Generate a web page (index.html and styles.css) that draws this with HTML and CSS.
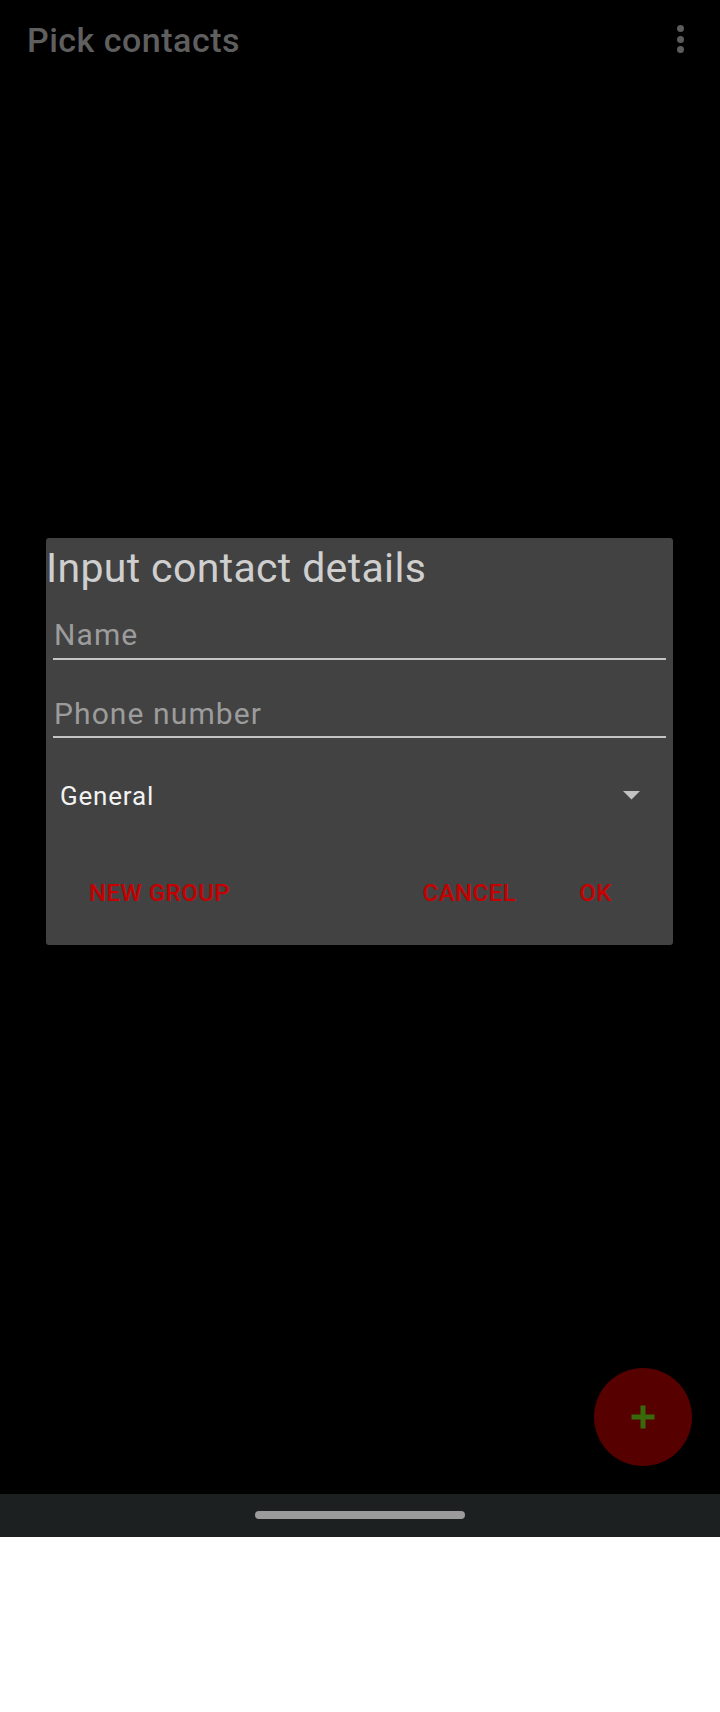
FILE: index.html
```html
<!DOCTYPE html>
<html>
<head>
<meta charset="utf-8">
<link rel="stylesheet" href="styles.css">
</head>
<body>
<div class="screen">
  <div class="app">
    <header class="toolbar">
      <div class="toolbar-title">Pick contacts</div>
      <div class="overflow"><span></span><span></span><span></span></div>
    </header>
    <main class="content"></main>
    <button class="fab" aria-label="Add">
      <svg width="24" height="24" viewBox="0 0 24 24"><rect x="0.5" y="9.5" width="23" height="5" fill="#386a0c"/><rect x="9.5" y="0.5" width="5" height="23" fill="#386a0c"/></svg>
    </button>
    <div class="dialog">
      <div class="dialog-title">Input contact details</div>
      <div class="field field-name"><span class="hint">Name</span></div>
      <div class="field field-phone"><span class="hint">Phone number</span></div>
      <div class="spinner">
        <span class="spinner-text">General</span>
        <svg class="spinner-arrow" width="17" height="9" viewBox="0 0 17 9"><polygon points="0,0 17,0 8.5,8.5" fill="#c2c2c2"/></svg>
      </div>
      <div class="actions">
        <span class="btn">NEW GROUP</span>
        <span class="spacer"></span>
        <span class="btn">CANCEL</span>
        <span class="btn btn-ok">OK</span>
      </div>
    </div>
  </div>
  <div class="navbar"><div class="handle"></div></div>
  <div class="below"></div>
</div>
</body>
</html>
```
FILE: styles.css
```css
html, body {
  margin: 0;
  padding: 0;
  background: #ffffff;
}
body {
  width: 720px;
  height: 1712px;
  font-family: Roboto, "Liberation Sans", sans-serif;
}
.screen {
  display: flex;
  flex-direction: column;
  width: 720px;
  height: 1712px;
}
.app {
  position: relative;
  height: 1494px;
  background: #000000;
  display: flex;
  flex-direction: column;
}
.toolbar {
  display: flex;
  align-items: flex-start;
  justify-content: space-between;
  padding: 20px 0 0 27px;
  height: 78px;
}
.toolbar-title {
  font-size: 34px;
  line-height: 40px;
  font-weight: 500;
  letter-spacing: 0.5px;
  color: #5f5f5f;
}
.overflow {
  display: flex;
  flex-direction: column;
  gap: 3.7px;
  margin: 5px 36px 0 0;
}
.overflow span {
  display: block;
  width: 7px;
  height: 7px;
  border-radius: 50%;
  background: #5c5c5c;
}
.content {
  flex: 1;
}
.fab {
  position: absolute;
  left: 594px;
  top: 1368px;
  width: 98px;
  height: 98px;
  border: none;
  border-radius: 50%;
  background: #560000;
  display: flex;
  align-items: center;
  justify-content: center;
  padding: 0;
}
.dialog {
  position: absolute;
  left: 46px;
  top: 538px;
  width: 627px;
  height: 407px;
  box-sizing: border-box;
  background: #424242;
  border-radius: 3px;
  padding-top: 6px;
  display: flex;
  flex-direction: column;
}
.dialog-title {
  font-size: 41px;
  line-height: 48px;
  letter-spacing: 0.35px;
  color: #cfcfcf;
}
.field {
  margin-left: 7px;
  width: 612px;
  border-bottom: 2px solid #c4c4c4;
  padding-bottom: 6px;
  padding-left: 1px;
}
.field-name {
  margin-top: 27px;
}
.field-phone {
  margin-top: 37px;
}
.hint {
  display: block;
  font-size: 30px;
  line-height: 33px;
  letter-spacing: 1.1px;
  color: #9c9c9c;
  margin-top: -1px;
  margin-bottom: 1px;
}
.field-phone .hint {
  margin-top: 0;
  margin-bottom: 0;
}
.spinner {
  margin-top: 43px;
  margin-left: 14px;
  width: 580px;
  display: flex;
  align-items: center;
  justify-content: space-between;
}
.spinner-text {
  font-size: 26px;
  line-height: 30px;
  letter-spacing: 0.8px;
  color: #f2f2f2;
}
.spinner-arrow {
  display: block;
  margin-top: -2px;
}
.actions {
  margin-top: 68px;
  display: flex;
  align-items: flex-start;
  padding: 0 61px 0 43px;
}
.btn {
  font-size: 24px;
  line-height: 28px;
  font-weight: 500;
  letter-spacing: 0.5px;
  color: #c60000;
}
.spacer {
  flex: 1;
}
.btn-ok {
  margin-left: 63px;
}
.navbar {
  height: 43px;
  background: #1d2021;
  display: flex;
  align-items: center;
  justify-content: center;
}
.handle {
  width: 210px;
  height: 8px;
  border-radius: 4px;
  background: #9a9b9a;
  margin-top: -2px;
}
.below {
  flex: 1;
  background: #ffffff;
}
```
